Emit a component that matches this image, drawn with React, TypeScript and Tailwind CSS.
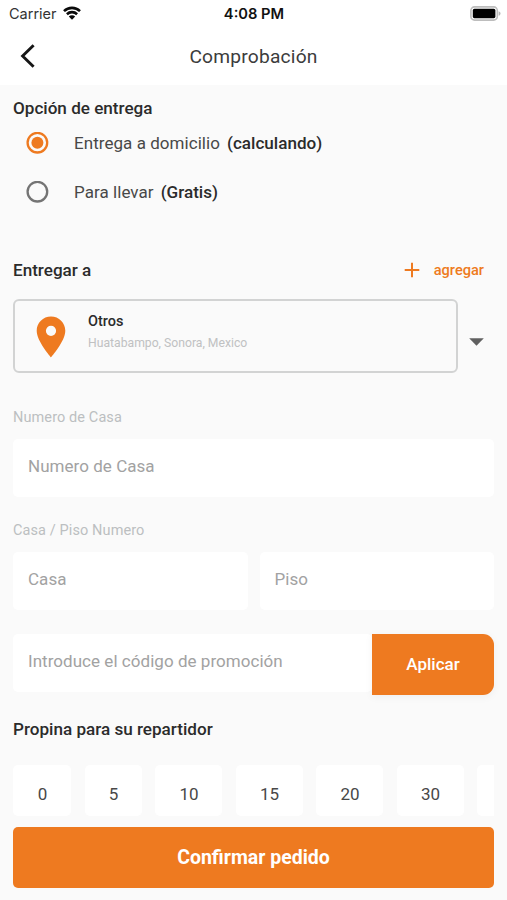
import React from 'react';

type ShippingOption = { label: string; note: string; selected: boolean };

const shippingOptions: ShippingOption[] = [
  { label: 'Entrega a domicilio', note: '(calculando)', selected: true },
  { label: 'Para llevar', note: '(Gratis)', selected: false },
];

const tips = [
  { value: '0', size: 'w-[58px]' },
  { value: '5', size: 'w-[57px]' },
  { value: '10', size: 'w-[67px]' },
  { value: '15', size: 'w-[67px]' },
  { value: '20', size: 'w-[67px]' },
  { value: '30', size: 'w-[67px]' },
  { value: '', size: 'w-[67px]' },
];

function StatusBar() {
  return (
    <div className="grid h-7 grid-cols-3 items-center pl-[9px] pr-[6px] font-['Inter',sans-serif] text-[#111]">
      <div className="flex items-center gap-[6px]">
        <span className="text-[14.5px] leading-7 text-[#333]">Carrier</span>
        <svg className="-mt-[2px]" width="18" height="14" viewBox="0 0 18 14" fill="none" stroke="#0a0a0a" strokeWidth="2.6">
          <path d="M1 5.1a11.6 11.6 0 0 1 16 0" />
          <path d="M3.9 8.2a7.4 7.4 0 0 1 10.2 0" />
          <path d="M9 13.7 5.8 10.5a4.6 4.6 0 0 1 6.4 0z" fill="#0a0a0a" stroke="none" />
        </svg>
      </div>
      <span className="-ml-[2px] text-center text-[14.7px] font-semibold leading-7">4:08 PM</span>
      <svg className="-mt-[2px] justify-self-end" width="31" height="15" viewBox="0 0 31 15">
        <rect x="0.9" y="0.9" width="26.4" height="13.2" rx="3.6" fill="#fff" stroke="#bdbdbd" strokeWidth="1.6" />
        <rect x="2.8" y="2.8" width="22.6" height="9.4" rx="1.6" fill="#000" />
        <path d="M28.6 5.2c1.3.4 1.9 1.3 1.9 2.3s-.6 1.9-1.9 2.3z" fill="#b5b5b5" />
      </svg>
    </div>
  );
}

function Radio({ selected }: { selected: boolean }) {
  return (
    <svg width="23" height="22" viewBox="0 0 23 22">
      <circle cx="11.4" cy="10.7" r="9.8" fill="none" strokeWidth="2.3" stroke={selected ? '#ee7a20' : '#747474'} />
      {selected && <circle cx="11.4" cy="10.7" r="6" fill="#ee7a20" />}
    </svg>
  );
}

function Field({ placeholder }: { placeholder: string }) {
  return (
    <input
      className="h-[58px] w-full min-w-0 rounded-[5px] bg-white px-[15px] pb-[4px] text-[17px] tracking-[0.04px] outline-none placeholder:text-[#a2a2a2]"
      placeholder={placeholder}
    />
  );
}

export default function App() {
  return (
    <div className="flex h-[900px] w-[507px] flex-col overflow-hidden bg-[#fafafa] font-['Roboto',sans-serif] text-[#2b2b2b]">
      <header className="h-[85px] shrink-0 bg-white">
        <StatusBar />
        <div className="grid h-14 grid-cols-[40px_1fr_40px] items-center">
          <button className="pl-5" aria-label="Atrás">
            <svg width="16" height="24" viewBox="0 0 16 24" fill="none" stroke="#161616" strokeWidth="2.9">
              <path d="M13.6 1.2 2.6 12l11 10.8" />
            </svg>
          </button>
          <h1 className="pt-[2px] text-center text-[19.2px] tracking-[0.2px] text-[#3c3c3c]">Comprobación</h1>
        </div>
      </header>

      <main className="flex flex-col px-[13px] pt-[11px]">
        <h2 className="h-[25px] text-[17.1px] font-medium leading-[25px]">Opción de entrega</h2>
        <div className="flex flex-col">
          {shippingOptions.map((option) => (
            <label key={option.label} className="flex h-[49px] items-start pl-[13px] pt-[11px]">
              <Radio selected={option.selected} />
              <span className="ml-[25px] text-[17px] leading-[22px] tracking-[0.05px] text-[#484848]">{option.label}</span>
              <span className="ml-[7px] text-[17.1px] font-medium leading-[22px]">{option.note}</span>
            </label>
          ))}
        </div>

        <div className="mt-[39px] flex h-6 items-center justify-between pr-[10px]">
          <h2 className="text-[17.1px] font-medium leading-6">Entregar a</h2>
          <button className="flex items-center gap-[14px] text-[14.6px] font-medium text-[#ee7a20]">
            <svg width="16" height="16" viewBox="0 0 16 16" stroke="#ee7a20" strokeWidth="2">
              <path d="M8 .7v14.6M.7 8h14.6" />
            </svg>
            <span className="pt-px">agregar</span>
          </button>
        </div>

        <div className="mt-[17px] flex items-center">
          <div className="flex h-[74px] w-[445px] rounded-[6px] border-2 border-[#d2d3d3]">
            <svg className="ml-[21px] mt-[15px] shrink-0" width="30" height="42" viewBox="0 0 30 42">
              <path
                fill="#ee7a20"
                fillRule="evenodd"
                d="M15 .6C7 .6.7 6.9.7 14.8.7 25.4 15 41.4 15 41.4s14.3-16 14.3-26.6C29.3 6.9 23 .6 15 .6zm0 19.3a5.1 5.1 0 1 1 0-10.2 5.1 5.1 0 0 1 0 10.2z"
              />
            </svg>
            <div className="ml-[22px] pt-[11px]">
              <p className="text-[14.5px] font-medium leading-5">Otros</p>
              <p className="mt-px text-[12.2px] leading-5 text-[#c0c1c2]">Huatabampo, Sonora, Mexico</p>
            </div>
          </div>
          <svg className="ml-[11px] mt-[12px]" width="15" height="8" viewBox="0 0 15 8">
            <path d="M.2.2h14.6L7.5 7.7z" fill="#606060" />
          </svg>
        </div>

        <p className="mt-[35px] text-[14.5px] leading-5 tracking-[0.1px] text-[#bcbfc1]">Numero de Casa</p>
        <div className="mt-[11px] flex">
          <Field placeholder="Numero de Casa" />
        </div>

        <p className="mt-[24px] text-[14.5px] leading-5 tracking-[0.1px] text-[#bcbfc1]">Casa / Piso Numero</p>
        <div className="mt-[11px] grid grid-cols-2 gap-3">
          <Field placeholder="Casa" />
          <Field placeholder="Piso" />
        </div>

        <div className="mt-[24px] flex h-[62px] items-start">
          <Field placeholder="Introduce el código de promoción" />
          <button className="h-[61px] w-[122px] shrink-0 rounded-r-[11px] bg-[#ee7a20] text-[17px] font-medium text-white shadow-[0_2px_8px_rgba(0,0,0,0.05)]">
            Aplicar
          </button>
        </div>

        <h2 className="mt-[21px] h-[25px] text-[17.1px] font-medium leading-6">Propina para su repartidor</h2>
        <div className="mt-[23px] flex h-[51px] gap-[13.5px] overflow-hidden">
          {tips.map((tip) => (
            <button
              key={tip.value}
              className={`${tip.size} h-[51px] shrink-0 rounded-[5px] bg-white pl-px pt-[8px] text-[17px] text-[#484848]`}
            >
              {tip.value}
            </button>
          ))}
        </div>

        <button className="mt-[11px] h-[61px] w-full rounded-[5px] bg-[#ee7a20] pt-px text-[19.5px] font-bold text-white">
          Confirmar pedido
        </button>
      </main>
    </div>
  );
}
